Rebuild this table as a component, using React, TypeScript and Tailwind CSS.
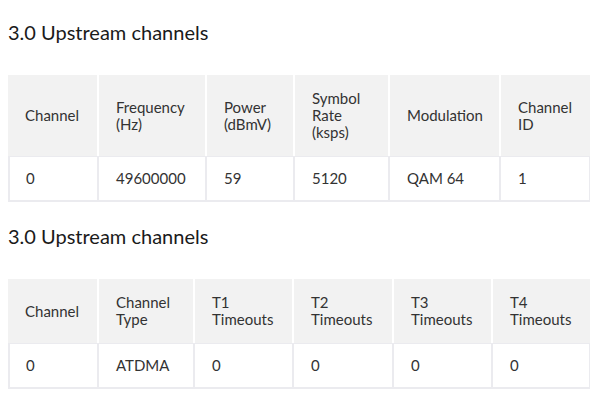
type Table = {
  title: string;
  cols: string;
  headers: string[][];
  row: string[];
};

const tables: Table[] = [
  {
    title: "3.0 Upstream channels",
    cols: "grid-cols-[89px_106px_86px_93px_109px_89px]",
    headers: [
      ["Channel"],
      ["Frequency", "(Hz)"],
      ["Power", "(dBmV)"],
      ["Symbol", "Rate", "(ksps)"],
      ["Modulation"],
      ["Channel", "ID"],
    ],
    row: ["0", "49600000", "59", "5120", "QAM 64", "1"],
  },
  {
    title: "3.0 Upstream channels",
    cols: "grid-cols-[89px_94px_97px_98px_97px_97px]",
    headers: [
      ["Channel"],
      ["Channel", "Type"],
      ["T1", "Timeouts"],
      ["T2", "Timeouts"],
      ["T3", "Timeouts"],
      ["T4", "Timeouts"],
    ],
    row: ["0", "ATDMA", "0", "0", "0", "0"],
  },
];

function ChannelTable({ table }: { table: Table }) {
  const last = table.row.length - 1;
  return (
    <div className="w-[582px]">
      <div className={`grid ${table.cols} gap-x-[2px] bg-white`}>
        {table.headers.map((lines, i) => (
          <div key={i} className="bg-[#f2f2f2] pl-[17px] pr-2 py-[15px] flex flex-col justify-center text-[15px] leading-[17px] text-[#333]">
            {lines.map((l, j) => (
              <span key={j}>{l}</span>
            ))}
          </div>
        ))}
      </div>
      <div className={`grid ${table.cols} gap-x-[2px] bg-[#ebebef] pt-[1px] pb-[2px]`}>
        {table.row.map((v, i) => (
          <div
            key={i}
            className={`bg-white h-[43px] flex items-center text-[15px] text-[#333] ${i === 0 ? "ml-[2px] pl-[16px]" : "pl-[17px]"} ${i === last ? "mr-[1px]" : ""}`}
          >
            {v}
          </div>
        ))}
      </div>
    </div>
  );
}

export default function App() {
  return (
    <div className="w-[599px] h-[396px] bg-white pl-2 pt-[20px] font-['Lato','Liberation_Sans',sans-serif]">
      {tables.map((t, i) => (
        <div key={i} className={i === 0 ? "" : "mt-[22px]"}>
          <h2 className="text-[20px] leading-[24px] text-[#1a1a1a] mb-[31px]">{t.title}</h2>
          <ChannelTable table={t} />
        </div>
      ))}
    </div>
  );
}
